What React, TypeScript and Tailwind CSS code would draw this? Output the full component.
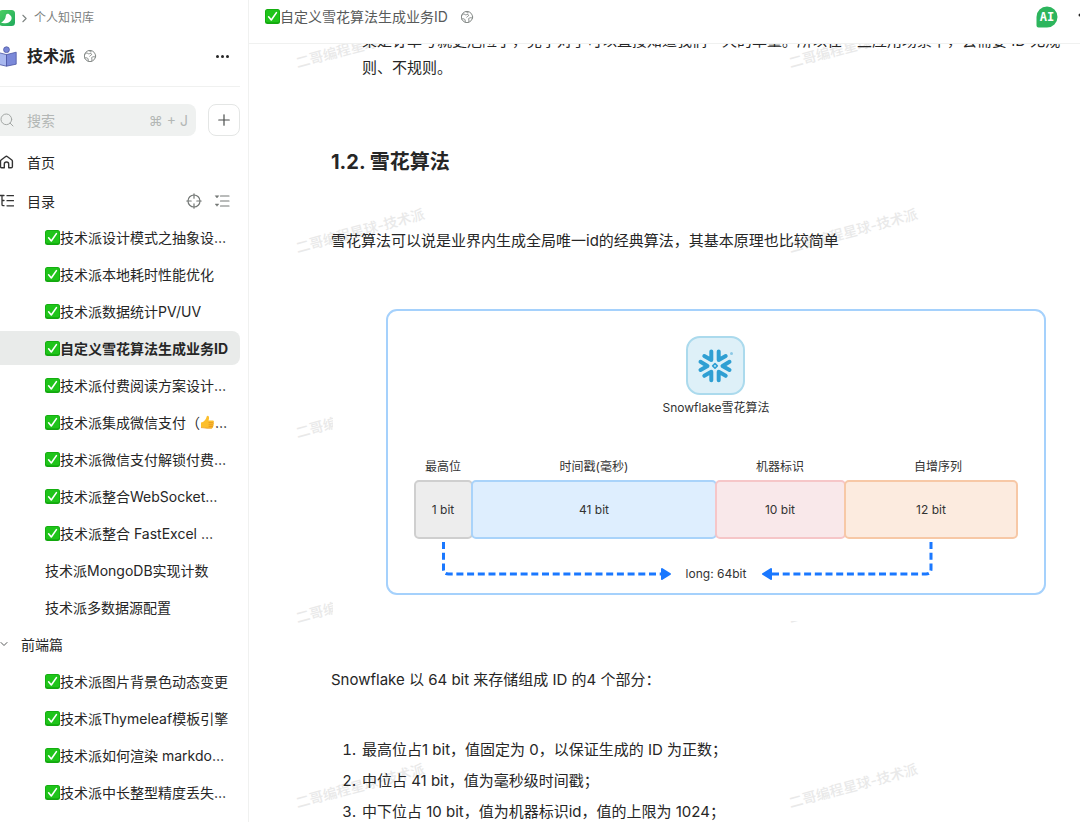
import { ChevronDown, ChevronRight, Plus, Search } from "lucide-react";
import { clsx } from "clsx";

type DocItem = {
  title: string;
  done?: boolean;
  thumb?: boolean;
  active?: boolean;
  group?: boolean;
};

const docs: DocItem[] = [
  { title: "技术派设计模式之抽象设…", done: true },
  { title: "技术派本地耗时性能优化", done: true },
  { title: "技术派数据统计PV/UV", done: true },
  { title: "自定义雪花算法生成业务ID", done: true, active: true },
  { title: "技术派付费阅读方案设计…", done: true },
  { title: "技术派集成微信支付（", done: true, thumb: true },
  { title: "技术派微信支付解锁付费…", done: true },
  { title: "技术派整合WebSocket…", done: true },
  { title: "技术派整合 FastExcel …", done: true },
  { title: "技术派MongoDB实现计数" },
  { title: "技术派多数据源配置" },
  { title: "前端篇", group: true },
  { title: "技术派图片背景色动态变更", done: true },
  { title: "技术派Thymeleaf模板引擎", done: true },
  { title: "技术派如何渲染 markdo…", done: true },
  { title: "技术派中长整型精度丢失…", done: true },
  { title: "", done: true },
];

function CheckEmoji() {
  return (
    <svg viewBox="0 0 15 15" className="size-[15px] shrink-0" aria-hidden="true">
      <rect width="15" height="15" rx="2.5" fill="#12a80e" />
      <rect x="0.7" y="0.7" width="13.6" height="12.6" rx="2" fill="#1fc41a" />
      <path
        d="M3.6 7.8 6.3 11 11.4 3.6"
        fill="none"
        stroke="#fff"
        strokeWidth="1.6"
        strokeLinecap="round"
        strokeLinejoin="round"
      />
    </svg>
  );
}

function ThumbEmoji() {
  return (
    <svg viewBox="0 0 15 15" className="size-[15px] shrink-0" aria-hidden="true">
      <path
        d="M1 7.6C2.6 7.2 4 6.3 5 5 6 3.8 6.4 2.6 6.8 1.2c.2-.8 1.6-.7 2 .2.5 1.2.2 2.8-.3 4.2h4.3c1.3 0 1.5 1.6.5 2 1 .4.9 1.8-.1 2.1.7.5.5 1.6-.4 1.8.5.6.1 1.7-.9 1.7H6.6c-1.6 0-2.6-.6-5.6-.6z"
        fill="#fcbf2d"
      />
      <path d="M9 7.7h4.2M9 9.8h4M9 11.6h3.7" stroke="#e08a1c" strokeWidth="0.7" strokeLinecap="round" />
      <path d="M1 12.6c3 0 4 .6 5.6.6h5.3" fill="none" stroke="#eb9a20" strokeWidth="0.8" />
    </svg>
  );
}

function GlobeIcon() {
  return (
    <svg
      viewBox="0 0 14 14"
      className="size-[14px] shrink-0"
      fill="none"
      stroke="#868b89"
      strokeWidth="1"
      strokeLinecap="round"
      strokeLinejoin="round"
      aria-hidden="true"
    >
      <circle cx="7" cy="7" r="5.6" />
      <path d="M1.6 5.6C2.6 4 3.9 3.6 4.8 4.4c.7.7 1.5.3 2.2.1 1.1-.3 2 .5 1.4 1.4-.5.7-1.4.5-1.7 1.2M6.2 1.6c.2.9.9 1.3 1.9 1.2M1.7 9c1.3-.6 3-.2 3.4.9.3.9-.2 1.5.1 2.3M12.4 8.2c-1.3-.9-3.3-.6-3.7.5-.3.9.4 1.4.3 2.2-.1.6-.3.9-.6 1.4" />
    </svg>
  );
}

function YuqueLogo() {
  return (
    <svg viewBox="1 0 15 16" className="h-4 w-[15px] shrink-0" aria-hidden="true">
      <defs>
        <linearGradient id="logo" x1="0" y1="0" x2="1" y2="1">
          <stop offset="0" stopColor="#4ccf63" />
          <stop offset="1" stopColor="#1fa95c" />
        </linearGradient>
      </defs>
      <rect width="16" height="16" rx="3.5" fill="url(#logo)" />
      <path
        d="M2 12.8c1.6-1 3-2.4 4-4 .8-1.4.6-2.9 1.200-4.200.5-1 1.700-1.200 2.600-.5l1.700 1.400c1.300 1.300 1.500 3.300.5 4.800-1.200 1.900-3.200 2.800-5.500 2.900-1.500.1-3 .1-4.500-.4z"
        fill="#fff"
      />
    </svg>
  );
}

function ReaderIcon() {
  return (
    <svg viewBox="0 0 17 21" className="h-[21px] w-[17px] shrink-0" aria-hidden="true">
      <circle cx="6.5" cy="3.7" r="2.9" fill="#7886d6" stroke="#4c57a3" strokeWidth="0.8" />
      <path d="M-3 6.2 6.5 8.6v11.6L-3 18z" fill="#a9b8ef" stroke="#4c57a3" strokeWidth="0.8" strokeLinejoin="round" />
      <path d="M16.2 6.2 6.5 8.6v11.6l9.7-2z" fill="#7b89d9" stroke="#4c57a3" strokeWidth="0.8" strokeLinejoin="round" />
    </svg>
  );
}

function HomeIcon() {
  return (
    <svg
      viewBox="0 0 14 16"
      className="h-4 w-[14px] shrink-0"
      fill="none"
      stroke="#333"
      strokeWidth="1.4"
      strokeLinejoin="round"
      strokeLinecap="round"
      aria-hidden="true"
    >
      <path d="M4.3 13.7H1.7c-.8 0-1.200-.4-1.200-1.200V7.200c0-.5.2-.9.6-1.200l4.300-3.300c.7-.5 1.400-.5 2.100 0L11.800 6c.4.3.6.7.6 1.200v5.300c0 .8-.4 1.200-1.200 1.200H8.700V10.200c0-2.900-4.400-2.900-4.400 0z" />
    </svg>
  );
}

function TocIcon() {
  return (
    <svg
      viewBox="0 0 14 14"
      className="size-[14px] shrink-0"
      fill="none"
      stroke="#333"
      strokeWidth="1.3"
      strokeLinecap="round"
      aria-hidden="true"
    >
      <path d="M-1 1.5h5M2 1.5v9c0 .8.4 1.2 1.2 1.2H4M2 6.5h2M7 1.7h6.5M7 6.7h6.5M7 11.8h6.5" />
    </svg>
  );
}

function LocateIcon() {
  return (
    <svg
      viewBox="0 0 16 16"
      className="size-4"
      fill="none"
      stroke="#747876"
      strokeWidth="1.2"
      strokeLinecap="round"
      aria-hidden="true"
    >
      <circle cx="8" cy="8" r="6" />
      <path d="M8 .8v4.4M8 10.8v4.4M.8 8h4.4M10.8 8h4.4" />
    </svg>
  );
}

function CollapseIcon() {
  return (
    <svg viewBox="0 0 16 14" className="h-[14px] w-4" aria-hidden="true">
      <path d="M6.5 2H15M6.5 7H15M6.5 12H15" stroke="#747876" strokeWidth="1.2" strokeLinecap="round" />
      <path d="M1.2 1.7h3.6L3 4zM1.2 10h3.6L3 12.3z" fill="#747876" stroke="#747876" strokeWidth="0.5" />
    </svg>
  );
}

function Sidebar() {
  return (
    <aside className="flex w-[249px] shrink-0 flex-col overflow-hidden border-r border-[#f0f1f0] pt-2 pr-2">
      <nav aria-label="面包屑" className="flex h-5 shrink-0 items-center">
        <a href="#home" aria-label="语雀">
          <YuqueLogo />
        </a>
        <ChevronRight size={13} strokeWidth={2} className="mx-[3px] shrink-0 text-[#7e8482]" />
        <a href="#library" className="text-[12px] text-[#7b807e]">
          个人知识库
        </a>
      </nav>

      <div className="mt-4 flex h-6 shrink-0 items-center">
        <ReaderIcon />
        <h2 className="ml-[10px] text-[16px] font-bold">技术派</h2>
        <span className="ml-2 flex">
          <GlobeIcon />
        </span>
        <button type="button" aria-label="更多" className="mr-[11px] ml-auto flex gap-[2px]">
          <i className="size-[3px] rounded-full bg-[#262626]" />
          <i className="size-[3px] rounded-full bg-[#262626]" />
          <i className="size-[3px] rounded-full bg-[#262626]" />
        </button>
      </div>

      <hr className="mt-[18px] shrink-0 border-[#f0f1f0]" />

      <div className="mt-[17px] flex h-8 shrink-0 gap-3">
        <label className="flex min-w-0 flex-1 items-center rounded-r-lg bg-[#eff1f0] pr-2 text-[#b3b7b5]">
          <Search size={16} strokeWidth={1.5} className="-ml-px shrink-0 text-[#a3a7a5]" />
          <input
            type="search"
            aria-label="搜索"
            placeholder="搜索"
            className="ml-3 w-full min-w-0 text-[14px] outline-none placeholder:text-[#b3b7b5]"
          />
          <kbd className="shrink-0 font-[Inter,'DejaVu_Sans','Noto_Sans_CJK_SC',sans-serif] text-[14px] whitespace-nowrap">
            ⌘ + J
          </kbd>
        </label>
        <button
          type="button"
          aria-label="新建"
          className="flex size-8 shrink-0 items-center justify-center rounded-lg border border-[#e4e6e5]"
        >
          <Plus size={18} strokeWidth={1.6} className="text-[#4a4d4c]" />
        </button>
      </div>

      <a href="#index" className="mt-[9px] flex h-[34px] shrink-0 items-center text-[14px]">
        <HomeIcon />
        <span className="ml-[13px]">首页</span>
      </a>
      <div className="mt-[5px] flex h-[34px] shrink-0 items-center text-[14px]">
        <TocIcon />
        <span className="ml-[13px]">目录</span>
        <button type="button" aria-label="定位当前文档" className="ml-auto">
          <LocateIcon />
        </button>
        <button type="button" aria-label="全部折叠" className="mr-[10px] ml-3">
          <CollapseIcon />
        </button>
      </div>

      <ul className="mt-[2px] flex flex-col gap-[3px]">
        {docs.map((doc) => (
          <li key={doc.title}>
            <a
              href="#doc"
              aria-current={doc.active ? "page" : undefined}
              className={clsx(
                "flex h-[34px] items-center rounded-r-lg text-[14px] whitespace-nowrap",
                doc.active && "bg-[#e9ebea] font-bold",
                !doc.group && "pl-[45px]"
              )}
            >
              {doc.group && (
                <ChevronDown size={12} strokeWidth={2} className="mr-[11px] -ml-[2px] shrink-0 text-[#585a5a]" />
              )}
              {doc.done && <CheckEmoji />}
              {doc.title}
              {doc.thumb && (
                <>
                  <ThumbEmoji />…
                </>
              )}
            </a>
          </li>
        ))}
      </ul>
    </aside>
  );
}

function DocHeader() {
  return (
    <header className="flex h-11 shrink-0 items-center border-b border-[#f0f1f0] pb-[10px] pl-4 text-[14px] text-[#585a5a]">
      <CheckEmoji />
      <h1>自定义雪花算法生成业务ID</h1>
      <span className="ml-3 flex">
        <GlobeIcon />
      </span>
      <button type="button" aria-label="AI 助手" className="mr-5 ml-auto">
        <svg viewBox="0 0 22 22" className="size-[22px]" aria-hidden="true">
          <path d="M11 .5A10.5 10.5 0 1 1 11 21.5H2.5a2 2 0 0 1-2-2V11A10.5 10.5 0 0 1 11 .5z" fill="#2db55d" />
          <text
            x="11"
            y="15"
            textAnchor="middle"
            fontSize="12"
            fontWeight="700"
            fontFamily="'DejaVu Sans Mono', monospace"
            fill="#fff"
          >
            AI
          </text>
        </svg>
      </button>
      <svg viewBox="0 0 2 8" className="h-2 w-[2px]" aria-hidden="true">
        <circle cx="2" cy="2" r="1.5" fill="#262626" />
      </svg>
    </header>
  );
}

function Watermark() {
  return (
    <div aria-hidden="true" className="absolute inset-0 overflow-hidden">
      <div className="mt-[-8px] ml-[45px] grid auto-rows-[185px] grid-cols-[493px_493px] text-[14px] leading-5 font-medium text-[#e9e9e9]">
        {Array.from({ length: 10 }, (_, i) => (
          <div key={i}>
            <span className="inline-block -rotate-[15deg] whitespace-nowrap">二哥编程星球-技术派</span>
          </div>
        ))}
      </div>
    </div>
  );
}

const segments = [
  { x: 84, w: 57, fill: "#ededed", stroke: "#cfcfcf", label: "最高位", labelX: 112, bits: "1 bit", bitsX: 112 },
  { x: 141, w: 244, fill: "#deeefe", stroke: "#a9d3fa", label: "时间戳(毫秒)", labelX: 263, bits: "41 bit", bitsX: 263 },
  { x: 385, w: 129, fill: "#f9e8ea", stroke: "#f6c6c8", label: "机器标识", labelX: 449, bits: "10 bit", bitsX: 449 },
  { x: 514, w: 172, fill: "#fcebdf", stroke: "#f7c8a6", label: "自增序列", labelX: 607, bits: "12 bit", bitsX: 600 },
];

function SnowflakeFigure() {
  return (
    <svg
      viewBox="0 0 749 339"
      role="img"
      aria-label="Snowflake雪花算法"
      className="mt-[26px] block w-full font-[Inter,'Noto_Sans_CJK_SC',sans-serif] text-[12px]"
      fill="#333"
      textAnchor="middle"
    >
      <rect x="2" width="747" height="339" fill="#fff" />
      <rect x="56" y="28" width="658" height="284" rx="10" fill="#fff" stroke="#a5d1fc" strokeWidth="2" />

      <rect x="356" y="55" width="57" height="57" rx="13" fill="#def0f8" stroke="#abdaed" strokeWidth="2" />
      <g fill="none" stroke="#2f9fd3" strokeWidth="4" strokeLinecap="round" strokeLinejoin="round">
        <path d="M380.3 69.5v8.5l-7-4" />
        <path d="M387.7 69.5v8.5l7-4" />
        <path d="M380.3 98.3v-8.5l-7 4" />
        <path d="M387.7 98.3v-8.5l7 4" />
        <path d="M369.5 79.8l7 4.1-7 4.1" />
        <path d="M398.5 79.8l-7 4.1 7 4.1" />
        <path d="M384 81.6l2.3 2.3-2.3 2.3-2.3-2.3z" strokeWidth="1.6" />
      </g>
      <circle cx="400.5" cy="71.5" r="1.5" fill="#8cc9e6" />
      <text x="385" y="130">
        Snowflake雪花算法
      </text>

      {segments.map((s) => (
        <g key={s.bits}>
          <text x={s.labelX} y="189">
            {s.label}
          </text>
          <rect x={s.x} y="199" width={s.w} height="57" rx="4" fill={s.fill} stroke={s.stroke} strokeWidth="2" />
          <text x={s.bitsX} y="232">
            {s.bits}
          </text>
        </g>
      ))}

      <g fill="none" stroke="#1a78ff" strokeWidth="3" strokeDasharray="7 3.7">
        <path d="M112.5 260v27q0 5 5 5H331" />
        <path d="M600 260v27q0 5-5 5H440" />
      </g>
      <g fill="#1a78ff" stroke="#1a78ff" strokeWidth="2" strokeLinejoin="round">
        <path d="M331 287l8 5-8 5z" />
        <path d="M440 287l-8 5 8 5z" />
      </g>
      <text x="385" y="296">
        long: 64bit
      </text>
    </svg>
  );
}

export default function App() {
  return (
    <div className="flex h-screen overflow-hidden bg-white font-[Inter,'Noto_Sans_CJK_SC',sans-serif] text-[#262626]">
      <Sidebar />
      <div className="flex min-w-0 flex-1 flex-col">
        <DocHeader />
        <main className="relative min-h-0 flex-1 overflow-hidden">
          <Watermark />
          {/* scrolled down: the first line is half under the header */}
          <article className="relative mt-[-17px] pl-[82px] text-[15px] leading-[31px]">
            <p className="pl-[31px] leading-[27px] whitespace-nowrap">
              果是订单号就更危险了，竞争对手可以直接知道我们一天的单量。所以在一些应用场景下，会需要 ID 无规
              <br />
              则、不规则。
            </p>
            <h2 className="mt-[65px] text-[20px] leading-8 font-bold">1.2. 雪花算法</h2>
            <p className="mt-[47px]">雪花算法可以说是业界内生成全局唯一id的经典算法，其基本原理也比较简单</p>
            <SnowflakeFigure />
            <p className="mt-[43px]">Snowflake 以 64 bit 来存储组成 ID 的4 个部分：</p>
            <ol className="mt-[39px] list-decimal pl-[29px]">
              <li className="pl-[2px]">最高位占1 bit，值固定为 0，以保证生成的 ID 为正数；</li>
              <li className="pl-[2px]">中位占 41 bit，值为毫秒级时间戳；</li>
              <li className="pl-[2px]">中下位占 10 bit，值为机器标识id，值的上限为 1024；</li>
            </ol>
          </article>
        </main>
      </div>
    </div>
  );
}
